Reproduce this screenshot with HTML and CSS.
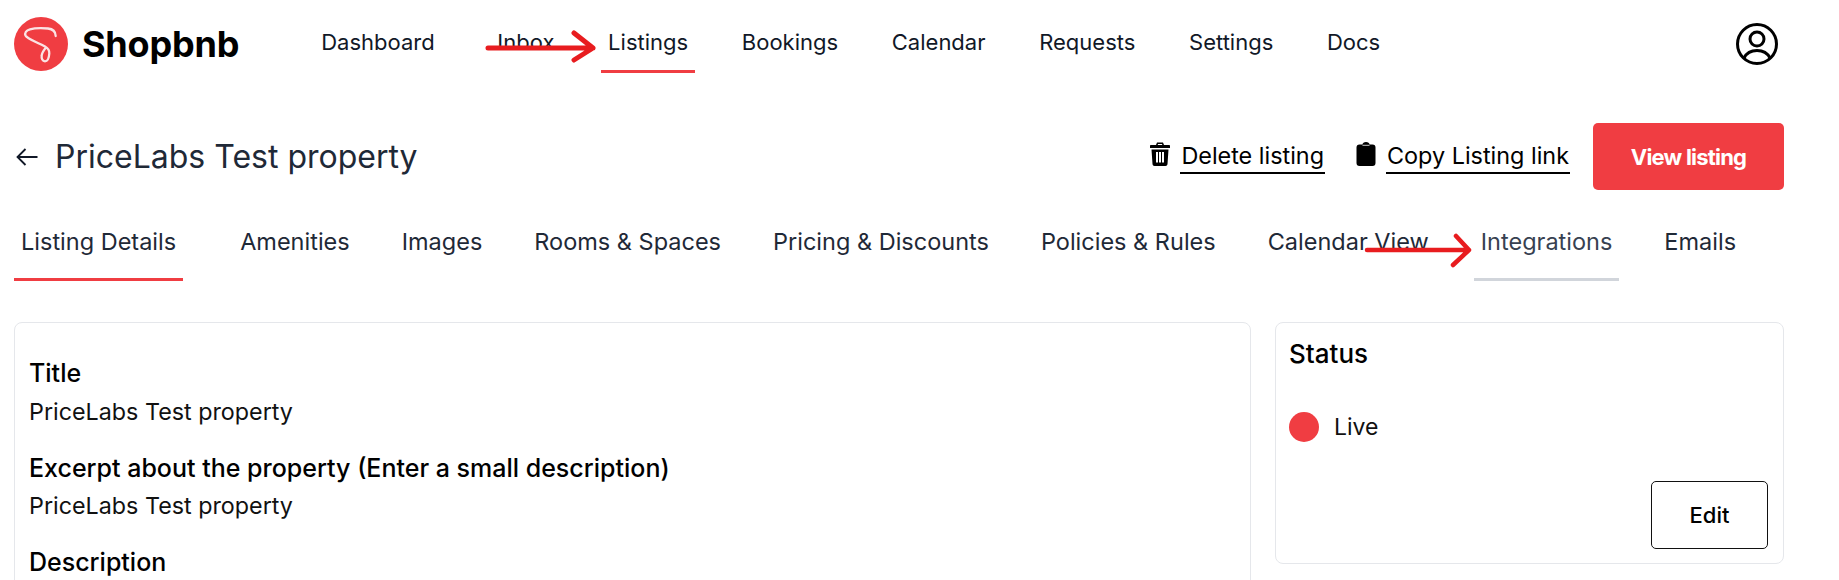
FILE: index.html
```html
<!DOCTYPE html>
<html lang="en">
<head>
<meta charset="utf-8">
<title>PriceLabs Test property</title>
<link rel="stylesheet" href="styles.css">
</head>
<body>
<div class="page">
  <header class="topbar">
    <a class="brand" href="#">
      <svg class="brand-mark" viewBox="0 0 54 54" aria-hidden="true"><circle cx="27" cy="27" r="27" fill="#f03d42"/><path d="M41.700 19C41.500 14 39 12 34 11.500C27 11 19 11.500 16 12.300C12 13.300 10.500 16 11.500 18.500C13 22 24 25.500 31 29.500C34.500 31.500 35.500 34 35.300 36.500C35 41 33.500 44.300 31 44.300C28.500 44.300 27.300 41.500 27.700 38.500C28 35.500 30 33 31.500 31" fill="none" stroke="#fbe3e4" stroke-width="2.300" stroke-linecap="round"/></svg>
      <span class="brand-name">Shopbnb</span>
    </a>
    <nav class="mainnav">
      <a class="mainnav-item mainnav-first" href="#">Dashboard</a>
      <a class="mainnav-item" href="#">Inbox</a>
      <a class="mainnav-item is-active" href="#">Listings</a>
      <a class="mainnav-item" href="#">Bookings</a>
      <a class="mainnav-item" href="#">Calendar</a>
      <a class="mainnav-item" href="#">Requests</a>
      <a class="mainnav-item" href="#">Settings</a>
      <a class="mainnav-item" href="#">Docs</a>
    </nav>
    <svg class="avatar" viewBox="0 0 42 42" aria-hidden="true"><circle cx="21" cy="21" r="19.5" fill="none" stroke="#000" stroke-width="3"/><circle cx="21" cy="16" r="7" fill="none" stroke="#000" stroke-width="3"/><path d="M8 35C11 29 16 27.500 21 27.500C26 27.500 31 29 34 35" fill="none" stroke="#000" stroke-width="3"/></svg>
  </header>

  <section class="titlerow">
    <svg class="back" viewBox="0 0 22 18" aria-hidden="true"><path d="M21.500 9H1.500M9.500 1L1.500 9L9.500 17" fill="none" stroke="#111827" stroke-width="1.800"/></svg>
    <h1 class="title">PriceLabs Test property</h1>
    <div class="actions">
      <a class="action" href="#">
        <svg class="action-icon" viewBox="0 0 20 24" aria-hidden="true"><path fill="#000" d="M7 0.500H13L14 3H19C19.600 3 20 3.400 20 4V6H0V4C0 3.400 0.400 3 1 3H6ZM8 2L7.700 3H12.300L12 2ZM1.500 7.500H18.500L17.500 22C17.400 23.200 16.600 24 15.500 24H4.500C3.400 24 2.600 23.200 2.500 22ZM6 10V20.500H8V10ZM9 10V20.500H11V10ZM12 10V20.500H14V10Z" fill-rule="evenodd"/></svg>
        <span class="action-text">Delete listing</span>
      </a>
      <a class="action action-last" href="#">
        <svg class="action-icon" viewBox="0 0 20 24" aria-hidden="true"><path fill="#000" d="M6.500 2.500C6.500 1 8 0 10 0C12 0 13.500 1 13.500 2.500H16.500C18.500 2.500 19.500 3.700 19.500 5.500V21C19.500 22.800 18.500 24 16.500 24H3.500C1.500 24 0.500 22.800 0.500 21V5.500C0.500 3.700 1.500 2.500 3.500 2.500Z"/><path d="M6.500 3.300H13.500" stroke="#fff" stroke-width="0.800"/></svg>
        <span class="action-text">Copy Listing link</span>
      </a>
      <a class="btn-primary" href="#">View listing</a>
    </div>
  </section>

  <nav class="tabs">
    <a class="tab tab-first is-current" href="#">Listing Details</a>
    <a class="tab" href="#">Amenities</a>
    <a class="tab" href="#">Images</a>
    <a class="tab" href="#">Rooms &amp; Spaces</a>
    <a class="tab" href="#">Pricing &amp; Discounts</a>
    <a class="tab" href="#">Policies &amp; Rules</a>
    <a class="tab" href="#">Calendar View</a>
    <a class="tab is-hover" href="#">Integrations</a>
    <a class="tab" href="#">Emails</a>
  </nav>

  <main class="content">
    <section class="card details">
      <h3 class="field-label">Title</h3>
      <p class="field-value">PriceLabs Test property</p>
      <h3 class="field-label">Excerpt about the property (Enter a small description)</h3>
      <p class="field-value">PriceLabs Test property</p>
      <h3 class="field-label">Description</h3>
    </section>
    <aside class="card status">
      <h3 class="status-title">Status</h3>
      <div class="status-row"><span class="status-dot"></span><span class="status-text">Live</span></div>
      <div class="status-foot"><a class="btn-outline" href="#">Edit</a></div>
    </aside>
  </main>

  <svg class="marker marker-one" viewBox="0 0 120 40" aria-hidden="true"><path d="M6 19H111M92 4L111 19L92 31" fill="none" stroke="#e81c1f" stroke-width="5" stroke-linecap="round" stroke-linejoin="round"/></svg>
  <svg class="marker marker-two" viewBox="0 0 120 40" aria-hidden="true"><path d="M5 18H107M94 4L107 18L91 33" fill="none" stroke="#e81c1f" stroke-width="4.500" stroke-linecap="round" stroke-linejoin="round"/></svg>
</div>
</body>
</html>
```
FILE: styles.css
```css
* { box-sizing: border-box; }
html, body { margin: 0; padding: 0; background: #fff; }
body { font-family: Inter, "Liberation Sans", Arial, sans-serif; color: #111827; }
a { color: inherit; text-decoration: none; }
h1, h3, p { margin: 0; }

.page { position: relative; width: 1839px; height: 580px; overflow: hidden; background: #fff; }

.topbar { display: flex; align-items: stretch; height: 73px; padding: 16px 61px 0 14px; }
.brand { display: flex; align-items: center; gap: 14px; height: 55px; color: #000; }
.brand-mark { width: 54px; height: 54px; flex: none; }
.brand-name { font-size: 36px; font-weight: 700; letter-spacing: -0.2px; }
.mainnav { display: flex; gap: 39.700px; margin-left: 75px; margin-top: -16px; }
.mainnav-item { display: flex; align-items: center; height: 73px; padding: 13px 7px 0; font-size: 22px; border-bottom: 3px solid transparent; }
.mainnav-first { margin-right: 9px; }
.mainnav-item.is-active { border-bottom-color: #f03d42; }
.avatar { width: 42px; height: 42px; margin: 7px 0 0 auto; flex: none; }

.titlerow { display: flex; align-items: center; height: 67px; margin-top: 50px; padding-left: 16px; padding-right: 55px; }
.back { width: 22px; height: 18px; flex: none; }
.title { margin-left: 17px; font-size: 32px; font-weight: 400; color: #1f2937; }
.actions { display: flex; align-items: center; margin-left: auto; }
.action { display: flex; align-items: center; gap: 10px; margin-right: 31px; color: #000; }
.action-last { margin-right: 23px; }
.action-icon { width: 20px; height: 24px; flex: none; margin-bottom: 6px; }
.action-text { font-size: 23.400px; line-height: 33px; padding: 0 1px; border-bottom: 2.500px solid #000; }
.btn-primary { display: flex; align-items: center; justify-content: center; width: 191px; height: 67px; background: #f03d42; color: #fff; border-radius: 5px; font-size: 22px; font-weight: 700; letter-spacing: -0.8px; }

.tabs { display: flex; gap: 38px; margin-top: 33px; padding-left: 14px; }
.tab { padding: 0 7px 17px; font-size: 23.500px; line-height: 38px; color: #1f2937; border-bottom: 3px solid transparent; }
.tab-first { margin-right: 12px; }
.tab.is-current { border-bottom-color: #f03d42; }
.tab.is-hover { border-bottom-color: #d1d5db; color: #374151; }

.content { display: grid; grid-template-columns: 1237px 509px; gap: 24px; align-items: start; margin-top: 41px; padding-left: 14px; }
.card { background: #fff; border: 1px solid #e5e7eb; border-radius: 8px; }
.details { height: 320px; padding: 36px 14px 0; }
.field-label { font-size: 25px; font-weight: 500; line-height: 28px; color: #000; margin-bottom: 10.500px; }
.field-value { font-size: 23.300px; line-height: 28px; color: #111; margin-bottom: 28px; }
.status { display: flex; flex-direction: column; height: 242px; padding: 16px 15px 14px 13px; }
.status-title { font-size: 26px; font-weight: 500; line-height: 30px; color: #000; }
.status-row { display: flex; align-items: center; gap: 15px; margin-top: 43px; }
.status-dot { width: 30px; height: 30px; border-radius: 50%; background: #f03d42; flex: none; }
.status-text { font-size: 23px; color: #111; }
.status-foot { display: flex; justify-content: flex-end; margin-top: auto; }
.btn-outline { display: flex; align-items: center; justify-content: center; width: 117px; height: 68px; border: 1.500px solid #111; border-radius: 5px; font-size: 22px; font-weight: 500; color: #000; }

.marker { position: absolute; width: 120px; height: 40px; }
.marker-one { left: 482px; top: 29px; }
.marker-two { left: 1362px; top: 232px; }
```
